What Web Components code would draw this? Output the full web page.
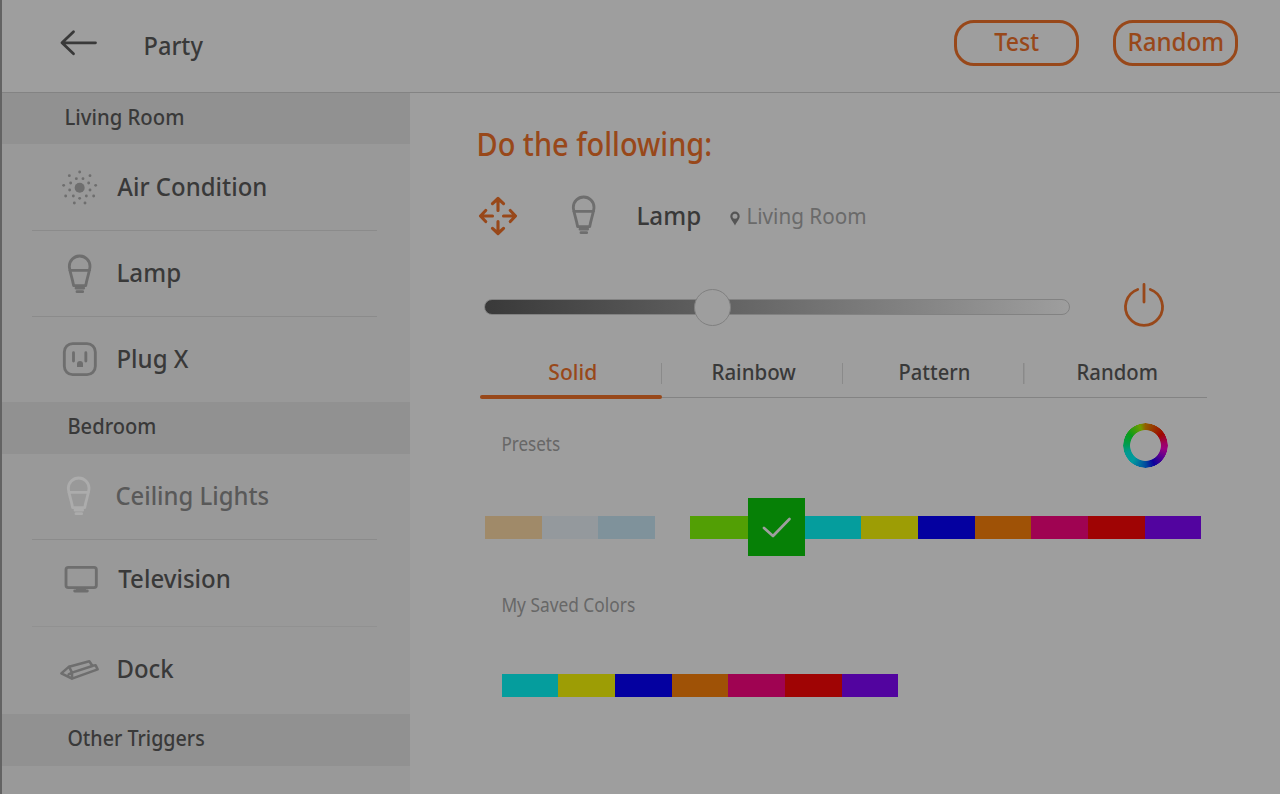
<!DOCTYPE html>
<html lang="en">
<head>
<meta charset="utf-8">
<title>Party</title>
<style>
html,body{margin:0;height:100%;overflow:hidden;background:#9e9e9e}
body{font-family:"Noto Sans","Open Sans",sans-serif;color:#393939}
</style>
</head>
<body>
<scene-app></scene-app>
<script>
const def=(name,html,after)=>{
  const t=document.createElement('template');t.innerHTML=html;
  customElements.define(name,class extends HTMLElement{
    constructor(){super();this.attachShadow({mode:'open'}).append(t.content.cloneNode(true));}
    connectedCallback(){if(after)after(this,this.shadowRoot);}
  });
};

/* Condensed label: its glyphs are fitted to the width given in "w". */
const ctx=document.createElement('canvas').getContext('2d');
def('fit-text',`<style>
:host{display:block;flex:none;white-space:nowrap;line-height:1;font-weight:500}
span{display:inline-block;transform-origin:0 0}
</style><span><slot></slot></span>`,(el,root)=>{
  const size=+el.getAttribute('size'),w=+el.getAttribute('w');
  el.style.fontSize=size+'px';el.style.width=w+'px';el.style.height=size+'px';
  ctx.font=(el.style.fontWeight||getComputedStyle(el).fontWeight||500)+' '+size+'px "Noto Sans"';
  const m=ctx.measureText(el.textContent),s=(w-.7)/(m.actualBoundingBoxLeft+m.actualBoundingBoxRight);
  root.querySelector('span').style.transform=`translateX(${m.actualBoundingBoxLeft*s+.3}px) scaleX(${s})`;
});

const icons={
air:'<g fill="currentColor"><circle cx="89" cy="83" r="15"/>'+[[89,36],[58,47],[120,47],[79,56],[99,56],[62,69],[116,69],[41,76],[137,76],[59,90],[120,90],[47,108],[131,108],[70,108],[109,108],[89,115],[73,129],[105,129]].map(p=>`<circle cx="${p[0]}" cy="${p[1]}" r="4.3"/>`).join('')+'</g>',
lamp:'<path d="M58 67A31 31 0 0 1 120 67C120 79 112 99 107 125H71C66 99 58 79 58 67ZM59 79H119"/><path d="M78 132.500H101M81 143H98"/>',
plug:'<rect x="43" y="41" width="93" height="93" rx="25"/><path d="M70.500 68V93M107.500 68V93"/><path d="M81 111V102A9 9 0 0 1 99 102V111Z" fill="currentColor" stroke="none"/>',
tv:'<rect x="48" y="22" width="91" height="61" rx="7"/><path d="M74 93H112M82 87H104"/>',
dock:'<path stroke-width="7.500" d="M34 100L57 80L118 64L127 77L137 76L143 88L66 116ZM57 80L66 98L66 116M66 98L56 103M66 98L127 78"/>'
};
def('line-icon',`<style>:host{display:block;flex:none;width:60px;height:60px;color:#6e6e6e}svg{display:block}</style>
<svg width="60" height="60" viewBox="0 0 180 180" fill="none" stroke="currentColor" stroke-width="8.500" stroke-linecap="round" stroke-linejoin="round"></svg>`,
(el,root)=>{const n=el.getAttribute('name'),s=root.querySelector('svg');s.innerHTML=icons[n];if(n==='air')s.setAttribute('stroke','none');});

def('pill-button',`<style>
:host{display:flex;justify-content:center;box-sizing:border-box;width:125px;height:46px;border:3px solid #98481a;border-radius:20px;color:#98481a;padding-top:5px}
</style><slot></slot>`);

def('top-bar',`<style>
:host{display:flex;box-sizing:border-box;height:93px;border-bottom:1px solid #838383;padding:20px 42px 0 56.500px;align-items:flex-start}
.title{margin:12px auto 0 46px}
.back{margin-top:8px}
pill-button+pill-button{margin-left:34px}
</style>
<svg class="back" width="40" height="30" viewBox="0 0 40 30" fill="none" stroke="#393939" stroke-width="2.800" stroke-linecap="round" stroke-linejoin="round"><path d="M36.500 14.800H3M14.500 3.800L3 14.800L14.500 25.800"/></svg>
<fit-text class="title" size="26" w="58.500">Party</fit-text>
<pill-button><fit-text size="26" w="45.500">Test</fit-text></pill-button>
<pill-button><fit-text size="26" w="94">Random</fit-text></pill-button>`);

def('group-header',`<style>:host{display:flex;box-sizing:border-box;height:52px;background:#919191;padding:12px 0 0 66.500px}</style><slot></slot>`);

def('device-row',`<style>
:host{display:flex;box-sizing:border-box;height:86px;margin:0 33px 0 29.500px;border-bottom:1px solid #8b8b8b;padding-left:18.500px;align-items:flex-start}
::slotted(fit-text){margin-top:28.400px;margin-left:8px}
::slotted(line-icon){margin-top:12.600px}
</style><slot></slot>`);

def('side-bar',`<style>
:host{display:block;width:408px;background:#999}
.last{border-color:transparent}
</style>
<group-header style="height:51px;padding:12px 0 0 64px"><fit-text size="22" w="118">Living Room</fit-text></group-header>
<device-row style="height:87px"><line-icon name="air" style="margin-top:16px"></line-icon><fit-text size="26" w="149.500" style="margin:29px 0 0 7px">Air Condition</fit-text></device-row>
<device-row><line-icon name="lamp"></line-icon><fit-text size="26" w="62.500">Lamp</fit-text></device-row>
<device-row class="last" style="height:85px"><line-icon name="plug" style="margin-top:13px"></line-icon><fit-text size="26" w="71">Plug X</fit-text></device-row>
<group-header style="padding:11.500px 0 0 66.500px"><fit-text size="22" w="87">Bedroom</fit-text></group-header>
<device-row style="padding-left:17px"><line-icon name="lamp" style="color:#acacac;margin-top:11.500px"></line-icon><fit-text size="26" w="153" style="color:#595959;margin:28px 0 0 7px">Ceiling Lights</fit-text></device-row>
<device-row style="height:87px;border-color:#919191"><line-icon name="tv" style="margin-top:20px"></line-icon><fit-text size="26" w="112" style="margin-top:25px">Television</fit-text></device-row>
<device-row class="last" style="height:87px"><line-icon name="dock" style="margin-top:13px"></line-icon><fit-text size="26" w="56.500" style="margin-top:28px">Dock</fit-text></device-row>
<group-header style="padding-left:66px"><fit-text size="22" w="136.500">Other Triggers</fit-text></group-header>`);

def('target-row',`<style>
:host{display:flex;align-items:flex-start;height:60px}
.place{color:#6a6a6a}
</style>
<svg width="42" height="42" viewBox="0 0 42 42" style="margin:10.800px 0 0 -1.300px" fill="none" stroke="#98481a" stroke-width="3.100" stroke-linecap="round" stroke-linejoin="round"><path d="M21 15.500V4M15.500 8.700L21 3.500L26.500 8.700M21 26.500V38M15.500 33.300L21 38.500L26.500 33.300M15.500 21H4M8.700 15.500L3.500 21L8.700 26.500M26.500 21H38M33.300 15.500L38.500 21L33.300 26.500"/></svg>
<line-icon name="lamp" style="margin:1.400px 0 0 35px"></line-icon>
<fit-text size="26" w="62.500" style="margin:17.500px 0 0 24px">Lamp</fit-text>
<svg width="10" height="15" viewBox="0 0 10 15" style="margin:26.500px 0 0 29.500px"><path fill="#555" fill-rule="evenodd" d="M5 .5A4.700 4.700 0 0 0 .3 5.200C.3 8 3 10.500 5 14.500C7 10.500 9.700 8 9.700 5.200A4.700 4.700 0 0 0 5 .5ZM5 2.800A2.500 2.500 0 1 1 5 7.800A2.500 2.500 0 1 1 5 2.800Z"/></svg>
<fit-text class="place" size="22" w="117.500" style="margin:19.600px 0 0 8.500px;font-weight:400">Living Room</fit-text>`);

def('dimmer-slider',`<style>
:host{display:grid;align-items:center;width:586px;height:38px}
.t,.k{grid-area:1/1;box-sizing:border-box}
.t{height:16px;border:1px solid #828282;border-radius:8px;background:linear-gradient(90deg,#393939,#9e9e9e) border-box}
.k{width:37px;height:37px;border-radius:50%;background:#9e9e9e;border:1px solid #808080;margin-left:210px}
</style><div class="t"></div><div class="k"></div>`);

def('power-button',`<style>:host{display:block}svg{display:block}</style>
<svg width="44" height="46" viewBox="0 0 44 46" fill="none" stroke="#98481a" stroke-width="2.800" stroke-linecap="round"><path d="M22 3.500V21M15.700 8.500A18.500 18.500 0 1 0 28.300 8.500"/></svg>`);

def('tab-item',`<style>
:host{display:flex;justify-content:center;box-sizing:border-box;height:44px;padding:6px 0 0 2px;border-bottom:1px solid #838383;background:linear-gradient(#8a8a8a,#8a8a8a) 100% 9px/1.500px 21px no-repeat}
:host([end]){background:none}
:host([on]){color:#98481a;position:relative}
:host([on])::after{content:"";position:absolute;left:0;right:0;bottom:-2px;height:4px;border-radius:2px;background:#98481a}
</style><slot></slot>`);
def('tab-strip',`<style>:host{display:grid;grid-template-columns:182px 181px 181.500px 182px}</style>
<tab-item on><fit-text size="22" w="47">Solid</fit-text></tab-item>
<tab-item style="padding-left:4px"><fit-text size="22" w="83.500">Rainbow</fit-text></tab-item>
<tab-item><fit-text size="22" w="70">Pattern</fit-text></tab-item>
<tab-item end><fit-text size="22" w="79.500" style="margin-left:2px">Random</fit-text></tab-item>`);

def('color-swatches',`<style>
:host{display:flex;height:23px}
i{display:block;width:56.700px;flex:none}
.sel{position:relative}
.sel b{position:absolute;left:0;top:-17.500px;width:57px;height:58px;background:#068006}
svg{display:block}
</style>`,(el,root)=>{
  el.getAttribute('colors').split(' ').forEach(c=>{
    const i=document.createElement('i');
    if(c==='check'){i.className='sel';i.innerHTML='<b><svg width="57" height="58" viewBox="0 0 57 58" fill="none" stroke="#9e9e9e" stroke-width="2.700" stroke-linecap="round" stroke-linejoin="round"><path d="M16 30L25 38L41.500 21"/></svg></b>';}
    else i.style.background=c;
    if(c==='#529f05')i.style.width='58px';
    root.append(i);
  });
});

def('color-wheel',`<style>
:host{display:block;width:45px;height:45px;border-radius:50%;background:conic-gradient(#925e00,#9e0800 55deg,#9e0064 85deg,#9a0080 100deg,#5a0090 125deg,#0b009c 155deg,#004c9e 180deg,#009a9e 220deg,#009a90 250deg,#009c4a 275deg,#0a9c1a 305deg,#6e9c00 345deg,#925e00);
-webkit-mask:radial-gradient(circle,transparent 15px,#000 15.800px,#000 22px,transparent 22.600px);mask:radial-gradient(circle,transparent 15px,#000 15.800px,#000 22px,transparent 22.600px)}
</style>`);

def('action-panel',`<style>
:host{display:block;padding:35px 0 0 68px}
.level{display:flex;align-items:flex-start;margin:44px 0 0 6px}
power-button{margin:-7px 0 0 52px}
tab-strip{margin:-4px 0 0 2px}
.cap{display:flex;justify-content:space-between;align-items:flex-start;width:666.500px;margin:25px 0 0 23.500px;color:#676767}
.cap fit-text{font-weight:400}
.sw{display:flex;margin:46.500px 0 0 7px}
</style>
<fit-text size="32" w="233" style="color:#98481a">Do the following:</fit-text>
<target-row style="margin-top:24px"></target-row>
<div class="level" style="height:70px"><dimmer-slider></dimmer-slider><power-button></power-button></div>
<tab-strip></tab-strip>
<div class="cap" style="height:46px"><fit-text size="19" w="58.500" style="margin-top:12.100px">Presets</fit-text><color-wheel></color-wheel></div>
<div class="sw"><color-swatches colors="#a08a69 #94999d #7f929b"></color-swatches><color-swatches style="margin-left:34.900px" colors="#529f05 check #059d9d #9d9d05 #0400a0 #9f5206 #9f0352 #9f0404 #52049f"></color-swatches></div>
<div class="cap" style="margin-top:57.500px"><fit-text size="19" w="133.500">My Saved Colors</fit-text></div>
<color-swatches style="margin:58.500px 0 0 23.500px" colors="#059d9d #9d9d05 #0400a0 #9f5206 #9f0352 #9f0404 #52049f"></color-swatches>`);

def('scene-app',`<style>
:host{display:grid;grid-template:93px 1fr/408px 1fr;box-sizing:border-box;height:794px;border-left:2px solid #636363;background:#9e9e9e}
top-bar{grid-column:1/3}
</style><top-bar></top-bar><side-bar></side-bar><action-panel></action-panel>`);
</script>
</body>
</html>
